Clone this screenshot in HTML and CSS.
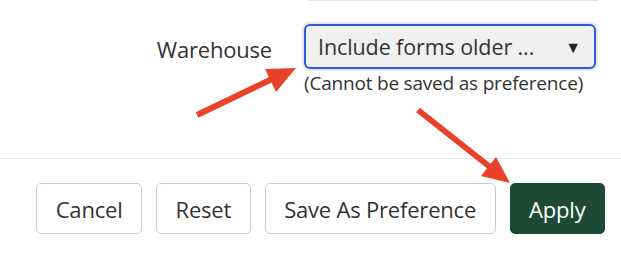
FILE: index.html
```html
<!DOCTYPE html>
<html>
<head>
  <title>Filters</title>
  <link rel="stylesheet" href="styles.css">
</head>
<body>
  <div class="panel">
    <div class="fields">
      <div class="prev-field"></div>
      <div class="field-row">
        <label class="field-label">Warehouse</label>
        <div class="field-control">
          <div class="select">
            <span class="select-value">Include forms older ...</span>
            <span class="select-caret">&#9660;</span>
          </div>
          <div class="hint">(Cannot be saved as preference)</div>
        </div>
      </div>
    </div>
    <div class="actions">
      <button class="btn">Cancel</button>
      <button class="btn">Reset</button>
      <button class="btn">Save As Preference</button>
      <button class="btn primary">Apply</button>
    </div>
  </div>

  <svg class="annotations" width="621" height="254" viewBox="0 0 621 254">
    <g fill="#e8432a" stroke="#e8432a">
      <line x1="197" y1="115" x2="272" y2="79" stroke-width="6"/>
      <polygon points="296,68 265,69 276,92" stroke="none"/>
      <line x1="418" y1="110" x2="490" y2="167" stroke-width="6"/>
      <polygon points="510,183 481,176 496,157" stroke="none"/>
    </g>
  </svg>
</body>
</html>
```
FILE: styles.css
```css
html, body {
  margin: 0;
  padding: 0;
}

body {
  background: #fff;
  color: #333;
  font-family: "Open Sans", "Noto Sans", sans-serif;
  width: 621px;
  height: 254px;
  overflow: hidden;
  position: relative;
}

.fields {
  padding: 0 25px 0 0;
  height: 158px;
}

.prev-field {
  margin-left: 308px;
  width: 290px;
  height: 1px;
  background: #e3e3e3;
}

.field-row {
  display: grid;
  grid-template-columns: 272px 292px;
  column-gap: 32px;
  margin-top: 23px;
}

.field-label {
  text-align: right;
  font-size: 22px;
  line-height: 45px;
  margin-top: 3px;
  letter-spacing: -0.2px;
}

.select {
  display: flex;
  align-items: center;
  justify-content: space-between;
  height: 45px;
  box-sizing: border-box;
  border: 2px solid #2b5dd6;
  border-radius: 6px;
  background: #f0f0f0;
  box-shadow: 0 0 0 2px #e6e6e6;
  padding: 0 13px 0 12px;
  font-size: 21.5px;
  letter-spacing: -0.1px;
}

.select-caret {
  font-size: 16px;
  color: #222;
}

.hint {
  font-size: 19px;
  margin-top: 2px;
  line-height: 25px;
  letter-spacing: -0.2px;
}

.actions {
  border-top: 1px solid #e6e6e6;
  display: flex;
  justify-content: flex-end;
  gap: 14px;
  padding: 24px 16px 0 0;
}

.btn {
  height: 51px;
  padding: 0 18.5px;
  font-family: inherit;
  font-size: 22px;
  letter-spacing: -0.2px;
  color: #333;
  background: #fff;
  border: 1px solid #ccc;
  border-radius: 5px;
}

.btn.primary {
  background: #1d4a37;
  border-color: #1d4a37;
  color: #fff;
}

.annotations {
  position: absolute;
  top: 0;
  left: 0;
}
```
